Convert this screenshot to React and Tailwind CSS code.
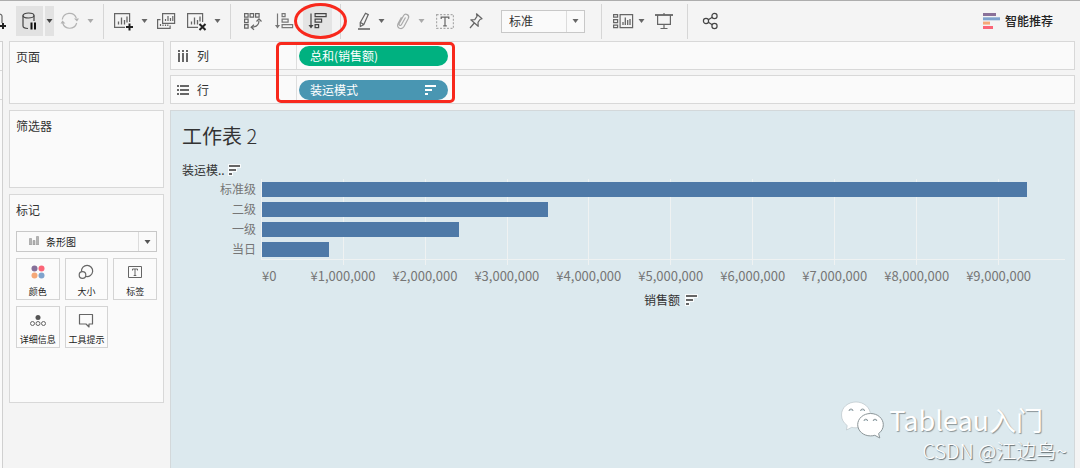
import React from "react";

const MAX = 9.81;
const BARS = [
  { label: "标准级", value: 9.34 },
  { label: "二级", value: 3.5 },
  { label: "一级", value: 2.41 },
  { label: "当日", value: 0.82 },
];
const TICKS = [1, 2, 3, 4, 5, 6, 7, 8, 9];
const pct = (v) => `${(v / MAX) * 100}%`;

function Caret({ className = "" }) {
  return (
    <svg width="7" height="4" viewBox="0 0 7 4" className={className} aria-hidden="true">
      <path d="M0.5 0h6L3.5 4z" fill="currentColor" />
    </svg>
  );
}

function Tool({ label, className, children }) {
  return (
    <button type="button" aria-label={label} className={`flex h-[30px] shrink-0 items-center justify-center ${className}`}>
      {children}
    </button>
  );
}

function Icon({ w = 20, h = 20, children, className = "text-[#666]", sw = 1.2 }) {
  return (
    <svg
      width={w}
      height={h}
      viewBox={`0 0 ${w} ${h}`}
      fill="none"
      stroke="currentColor"
      strokeWidth={sw}
      className={`shrink-0 ${className}`}
      aria-hidden="true"
    >
      {children}
    </svg>
  );
}

function Separator({ className }) {
  return <div className={`h-[35px] w-px shrink-0 bg-[#d6d6d6] ${className}`} />;
}

function SortGlyph({ color = "#666", halo = false }) {
  return (
    <svg width="13" height="12" viewBox="0 0 13 12" className="shrink-0" aria-hidden="true">
      {halo && <path d="M0 0h13v4H9v4H5v4H0z" fill="#fff" opacity="0.8" />}
      <path d="M1 1h11v2H1zM1 5h7v2H1zM1 9h3v2H1z" fill={color} />
    </svg>
  );
}

function Toolbar() {
  return (
    <header className="flex h-[41px] items-center border-t border-[#adadad]">
      <Tool label="新建数据源" className="w-2">
        <Icon w={8} h={20}>
          <path d="M0 3.2c1.200.3 2 1 2 1.800v7" />
          <path d="M3 12v6M0 15h6" stroke="#222" strokeWidth="2" />
        </Icon>
      </Tool>
      <Tool label="暂停自动更新" className="ml-2 w-[27px] bg-[#e2e2e2]">
        <Icon className="text-[#444]" w={20} h={20}>
          <ellipse cx="8.500" cy="4.500" rx="5.500" ry="2.500" />
          <path d="M3 4.500v10.500c0 1.200 1.800 2.300 5 2.500M14 4.500v5.500" />
          <path d="M11.500 11.500v7M15 11.500v7" stroke="#111" strokeWidth="2" />
        </Icon>
      </Tool>
      <Tool label="自动更新选项" className="ml-[2px] w-[9px] bg-[#e2e2e2] text-[#444]">
        <Caret />
      </Tool>
      <Tool label="刷新" className="ml-[6px] w-5">
        <Icon className="text-[#b3b3b3]">
          <path d="M2.300 8.500a7.300 7.300 0 0 1 14-1.500M16.700 12a7.300 7.300 0 0 1-14 0" />
          <path d="M14 7.500h5l-2 3zM.500 12.500h5l-3-3z" fill="currentColor" stroke="none" />
        </Icon>
      </Tool>
      <Tool label="刷新选项" className="ml-1 w-3 text-[#aaa]"><Caret /></Tool>
      <Separator className="ml-[7px]" />
      <Tool label="新建工作表" className="ml-[9px] w-[21px]">
        <Icon w={21} h={20}>
          <path d="M12 16.400H1.600V2.600h15V11" />
          <path d="M5.500 13.500v-3M8.500 13.500v-7M11.500 13.500V9M14 11.500V5.500" strokeWidth="1.300" />
          <path d="M16.500 12.500v7M13 16h7" stroke="#222" strokeWidth="2" />
        </Icon>
      </Tool>
      <Tool label="新建选项" className="ml-1 w-3 text-[#666]"><Caret /></Tool>
      <Tool label="复制工作表" className="ml-[6px] w-5">
        <Icon>
          <path d="M6.600 2.600h12v9.800h-12z" />
          <path d="M9.500 10V8M12 10V5M14.500 10V7M16.800 10V5" />
          <path d="M4.500 8.600H1.600v8.800h12.500V14.500" />
          <path d="M4.500 15v-2M7 15v-1.500M9.500 15v-1.500M11.800 15v-1.500" />
        </Icon>
      </Tool>
      <Tool label="清除工作表" className="ml-[10px] w-[21px]">
        <Icon w={21} h={20}>
          <path d="M12 16.400H1.600V2.600h15V11" />
          <path d="M5.500 13.500v-3M8.500 13.500v-7M11.500 13.500V9M14 10.500V5.500" strokeWidth="1.300" />
          <path d="M13.500 13l6 6M19.500 13l-6 6" stroke="#222" strokeWidth="2" />
        </Icon>
      </Tool>
      <Tool label="清除选项" className="ml-1 w-3 text-[#666]"><Caret /></Tool>
      <Separator className="ml-[7px]" />
      <Tool label="交换行和列" className="ml-3 w-5">
        <Icon>
          <path d="M1.600 2.600h3.500v3.500H1.600zM7.100 2.600h3.500v3.500H7.100zM12.600 2.600h3.500v3.500h-3.500zM1.600 8.100h3.500v3.500H1.600zM1.600 13.600h3.500v3.500H1.600z" />
          <path d="M16 9.500c0 4-2.500 6.500-7.500 6.800" />
          <path d="M13.500 10.500L16 7.800l2.500 2.700M11 13.800l-2.800 2.500 2.800 2.500" />
        </Icon>
      </Tool>
      <Tool label="升序排序" className="ml-3 w-5">
        <Icon className="text-[#777]">
          <path d="M2.500 2.500v13" />
          <path d="M0 14h5l-2.500 3.500z" fill="currentColor" stroke="none" />
          <path d="M7.100 2.600h3v3h-3zM7.100 8.100h6v3h-6zM7.100 13.600h10.500v3H7.100z" />
        </Icon>
      </Tool>
      <div className="relative ml-2 shrink-0">
        <Tool label="降序排序" className="w-[29px] bg-[#e4e4e4]">
          <Icon className="text-[#444]">
            <path d="M3 2.500v13" />
            <path d="M.500 14h5L3 17.500z" fill="currentColor" stroke="none" />
            <path d="M7.100 2.600h11v3h-11zM7.100 8.100h6.500v3H7.100zM7.100 13.600h3.500v3H7.100z" />
          </Icon>
        </Tool>
        <div className="pointer-events-none absolute -top-[3px] -left-[9px] z-10 h-9 w-[53px] rounded-[50%] border-[3px] border-[#f8281c]" />
      </div>
      <Separator className="ml-2" />
      <Tool label="突出显示" className="ml-[15px] w-4">
        <Icon w={16} h={20}>
          <path d="M9.500 2.300l2.800 1.300-4.500 10-3.500 2-.1-4zM4.500 11.500l3.300 2" />
          <path d="M2 18h12" strokeWidth="1.600" />
        </Icon>
      </Tool>
      <Tool label="突出显示选项" className="ml-[3px] w-3 text-[#666]"><Caret /></Tool>
      <Tool label="组成员" className="ml-2 w-4">
        <Icon w={16} h={20} className="text-[#aaa]">
          <path d="M10.500 6.500l-4 7c-1.200 2-3.200.7-2.200-1.300l4.200-7.500c1.800-3 6.500-.8 4.800 2.800l-4.300 8c-2.300 4-8 1.500-6-2.800l3.500-6.500" />
        </Icon>
      </Tool>
      <Tool label="组选项" className="ml-1 w-3 text-[#aaa]"><Caret /></Tool>
      <Tool label="显示标记标签" className="ml-2 w-5">
        <Icon>
          <path d="M1.600 3.600h16.800v13.800H1.600z" strokeDasharray="2 1.500" stroke="#aaa" />
          <path d="M6.200 8V6.100h7.600V8M10 6v8.800M8.200 14.800h3.600" />
        </Icon>
      </Tool>
      <Tool label="固定轴" className="ml-[13px] w-4">
        <Icon w={16} h={20}>
          <path d="M8.500 2.800l5.500 5-2 .7-2 2.800.2 4-7.400-6.500 4-.2 2.200-3.300zM6.300 12L2 17" strokeLinejoin="round" />
        </Icon>
      </Tool>
      <div className="relative ml-[17px] w-[84px] shrink-0">
        <select aria-label="适合" className="block h-[23px] w-full appearance-none border border-[#c8c8c8] bg-[#fafafa] pl-[7px] text-[12px] text-[#333]">
          <option>标准</option>
        </select>
        <div className="pointer-events-none absolute inset-y-px right-px flex w-[18px] items-center justify-center border-l border-[#dcdcdc] text-[#666]">
          <Caret />
        </div>
      </div>
      <Separator className="ml-4" />
      <Tool label="显示/隐藏卡" className="ml-[10px] w-[22px]">
        <Icon w={22} h={20}>
          <path d="M1.600 3.600h4v2.500h-4zM1.600 8.600h4v3h-4zM1.600 14.100h4v2.500h-4zM8.100 3.600h12.500v13H8.100z" />
          <path d="M11 14v-3M13.300 14V6.500M15.700 14V9M18 14V8" strokeWidth="1.300" />
        </Icon>
      </Tool>
      <Tool label="卡选项" className="ml-px w-3 text-[#666]"><Caret /></Tool>
      <Tool label="演示模式" className="ml-[7px] w-5">
        <Icon>
          <path d="M1 4h18" strokeWidth="1.800" />
          <path d="M3.600 4v9.400h12.800V4M10 2v2M10 13.400v4M6.500 17.500h7" />
        </Icon>
      </Tool>
      <Separator className="ml-[13px]" />
      <Tool label="共享" className="ml-[14px] w-[18px]">
        <Icon w={18} h={20} className="text-[#444]">
          <circle cx="4" cy="10" r="2.600" />
          <circle cx="12.500" cy="5" r="2.600" />
          <circle cx="12.500" cy="15" r="2.600" />
          <path d="M6.300 8.800l4-2.500M6.300 11.200l4 2.500" />
        </Icon>
      </Tool>
      <button type="button" className="mr-[27px] ml-auto flex h-[30px] shrink-0 items-center gap-[5px] text-[12px] font-medium text-[#222]">
        <svg width="17" height="16" viewBox="0 0 17 16" aria-hidden="true">
          <path d="M0 0h13v3H0z" fill="#8a7199" />
          <path d="M0 4.300h17v3H0z" fill="#7fa3cd" />
          <path d="M0 8.600h7v3H0z" fill="#f5a878" />
          <path d="M0 13h10v3H0z" fill="#fb6577" />
        </svg>
        智能推荐
      </button>
    </header>
  );
}

function Card({ title, className, children }) {
  return (
    <section className={`border border-[#d8d8d8] bg-[#fafafa] px-[6px] pt-[7px] ${className}`}>
      <h2 className="text-[12px] leading-4 text-[#333]">{title}</h2>
      {children}
    </section>
  );
}

function Mark({ label, children }) {
  return (
    <button type="button" className="flex h-[42px] flex-col items-center justify-between border border-[#d4d4d4] bg-[#fbfbfb] pt-1 text-[9px] leading-[14px] whitespace-nowrap text-[#222]">
      {children}
      {label}
    </button>
  );
}

function SideBar() {
  return (
    <aside className="flex w-[155px] shrink-0 flex-col gap-[6px]">
      <Card title="页面" className="min-h-[63px]" />
      <Card title="筛选器" className="min-h-[78px]" />
      <Card title="标记" className="min-h-[209px]">
        <div className="relative mt-[13px]">
          <select aria-label="标记类型" className="block h-[21px] w-full appearance-none border border-[#c8c8c8] bg-[#fafafa] pl-[29px] text-[10px] text-[#222]">
            <option>条形图</option>
          </select>
          <svg width="10" height="9" viewBox="0 0 10 9" className="pointer-events-none absolute top-[5px] left-[13px]" aria-hidden="true">
            <path d="M.500 2.500h2V9h-2zM4 4.500h2V9H4zM7.500.500h2V9h-2z" fill="#b5b5b5" stroke="#888" strokeWidth=".5" />
          </svg>
          <div className="pointer-events-none absolute inset-y-px right-px flex w-[18px] items-center justify-center border-l border-[#dcdcdc] text-[#555]">
            <Caret />
          </div>
        </div>
        <div className="mt-[6px] grid grid-cols-3 gap-x-[5px] gap-y-[6px]">
          <Mark label="颜色">
            <Icon w={18} h={18}>
              <g stroke="none">
                <circle cx="5.500" cy="5.500" r="3" fill="#857099" />
                <circle cx="12.500" cy="5.500" r="3" fill="#fb6577" />
                <circle cx="5.500" cy="12.500" r="3" fill="#f5a878" />
                <circle cx="12.500" cy="12.500" r="3" fill="#7fa3cd" />
              </g>
            </Icon>
          </Mark>
          <Mark label="大小">
            <Icon w={18} h={18}>
              <path d="M4.500 8.500A5.600 5.600 0 1 1 9 13.500" />
              <circle cx="5.500" cy="12" r="3.300" />
            </Icon>
          </Mark>
          <Mark label="标签">
            <Icon w={18} h={18} sw={1}>
              <path d="M2.500 3.500h13v11h-13z" />
              <path d="M6.500 7.500V6h5v1.500M9 6v6.500M7.700 12.500h2.600" />
            </Icon>
          </Mark>
          <Mark label="详细信息">
            <Icon w={18} h={18} sw={1}>
              <circle cx="9" cy="6.500" r="2.500" fill="#555" stroke="none" />
              <circle cx="3.500" cy="12.500" r="2" />
              <circle cx="9" cy="12.500" r="2" />
              <circle cx="14.500" cy="12.500" r="2" />
            </Icon>
          </Mark>
          <Mark label="工具提示">
            <Icon w={18} h={18}>
              <path d="M2.500 3.500h13v9.500h-3.500v3L9 13H2.500z" strokeLinejoin="round" />
            </Icon>
          </Mark>
        </div>
      </Card>
    </aside>
  );
}

function Shelf({ title, icon, children }) {
  return (
    <div className="flex h-[29px] items-center border border-[#d8d8d8] bg-[#fafafa]">
      <div className="flex h-full w-[126px] shrink-0 items-center gap-2 border-r border-[#dedede] pl-[6px] text-[12px] text-[#333]">
        {icon}
        {title}
      </div>
      {children}
    </div>
  );
}

function Shelves() {
  return (
    <div className="relative flex flex-col gap-[5px]">
      <Shelf
        title="列"
        icon={
          <svg width="12" height="12" viewBox="0 0 12 12" fill="#666" aria-hidden="true">
            <path d="M1 0h2v2H1zM5 0h2v2H5zM9 0h2v2H9zM1 3h2v9H1zM5 3h2v9H5zM9 3h2v9H9z" />
          </svg>
        }
      >
        <button type="button" className="ml-[2px] flex h-5 w-[149px] items-center rounded-full bg-[#00b180] pl-[11px] text-[12px] text-white">
          总和(销售额)
        </button>
      </Shelf>
      <Shelf
        title="行"
        icon={
          <svg width="12" height="12" viewBox="0 0 12 12" fill="#666" aria-hidden="true">
            <path d="M0 1h2v2H0zM0 5h2v2H0zM0 9h2v2H0zM3 1h9v2H3zM3 5h9v2H3zM3 9h9v2H3z" />
          </svg>
        }
      >
        <button type="button" className="ml-[2px] flex h-5 w-[149px] items-center justify-between rounded-full bg-[#4996b2] pr-[11px] pl-[11px] text-[12px] text-white">
          装运模式
          <SortGlyph color="#fff" />
        </button>
      </Shelf>
      <div className="pointer-events-none absolute top-px left-[106px] h-[61px] w-[179px] rounded-[5px] border-[3px] border-[#f8281c]" />
    </div>
  );
}

function Chart() {
  return (
    <div className="pr-[9px] text-[12px] text-[#767676]">
      <div className="flex h-[18px] items-center gap-[3px] pl-[11px] text-[#333]">
        装运模..
        <SortGlyph halo />
      </div>
      <div className="flex">
        <ul className="w-[90px] shrink-0 pr-[5px] text-right leading-5">
          {BARS.map((b) => (
            <li key={b.label}>{b.label}</li>
          ))}
        </ul>
        <div className="relative flex-1 border-b border-l border-[#eff2f2]">
          {TICKS.map((t) => (
            <div key={t} className="absolute top-0 -bottom-[6px] -ml-px w-px bg-[#eff2f2]" style={{ left: pct(t) }} />
          ))}
          {BARS.map((b) => (
            <div key={b.label} className="relative flex h-5 items-center">
              <div className="h-[15px] bg-[#4e79a7]" style={{ width: pct(b.value) }} />
            </div>
          ))}
        </div>
      </div>
      <div className="relative mt-[6px] ml-[90px] h-5 text-[13px] leading-5">
        <span className="absolute left-px">¥0</span>
        {TICKS.map((t) => (
          <span key={t} className="absolute -translate-x-1/2" style={{ left: pct(t) }}>
            ¥{t},000,000
          </span>
        ))}
      </div>
      <div className="mt-1 ml-[90px] flex h-5 items-center justify-center gap-[5px] pl-4 text-[#333]">
        销售额
        <SortGlyph halo />
      </div>
    </div>
  );
}

function Watermark() {
  return (
    <div className="pointer-events-none absolute right-[7px] bottom-[5px] flex flex-col items-end text-white">
      <div className="mr-[24px] flex items-center gap-1 text-[27px] leading-8 [text-shadow:1px_1px_1px_#8b9598]">
        <svg width="44" height="38" viewBox="0 0 44 38" aria-hidden="true" fill="#fff" stroke="#b4bec2" strokeWidth="0.600">
          <path d="M15 1C7 1 .500 6.500.500 14c0 4.300 2.200 8 5.700 10.500L5.500 29l5.200-2.700c1.400.4 2.800.5 4.300.5 8 0 14.500-5.500 14.500-12.800S23 1 15 1z" />
          <path d="M29.500 12.500c-7.200 0-12.800 5-12.800 11.200s5.600 11.200 12.800 11.200c1.500 0 3-.2 4.300-.6l5 2.700-1.200-4.500c3-2 4.700-5.200 4.700-8.800 0-6.200-5.600-11.200-12.800-11.200z" stroke="#8b9598" strokeWidth="1" />
          <path d="M8 10a2 2 0 1 1 4 0M19.600 10a2 2 0 1 1 4 0M23 20a1.800 1.800 0 1 1 3.600 0M32.200 20a1.800 1.800 0 1 1 3.600 0" fill="#dce9ee" stroke="#8b9598" strokeWidth="1" />
        </svg>
        Tableau入门
      </div>
      <div className="text-[20px] leading-6 font-light [text-shadow:1px_1px_1px_#5f686b]">CSDN @江边鸟~</div>
    </div>
  );
}

export default function App() {
  return (
    <div className="flex min-h-screen flex-col overflow-hidden bg-[#f4f4f4] font-['Noto_Sans_CJK_SC',sans-serif]">
      <Toolbar />
      <div className="flex flex-1 pr-[5px]">
        <div className="mr-[6px] w-[3px] shrink-0 border-t border-r border-[#d0d0d0] bg-[#fafafa]">
          <div className="h-[29px] border-b border-[#d8d8d8]" />
          <div className="h-[29px] border-b border-[#d8d8d8]" />
        </div>
        <SideBar />
        <main className="ml-[6px] flex min-w-0 flex-1 flex-col gap-[6px]">
          <Shelves />
          <section className="relative flex-1 border-x border-t border-[#d3d8da] bg-[#dce9ee]">
            <h1 className="mt-[9px] mb-[9px] pl-[11px] text-[20px] leading-8 text-[#333]">
              工作表 <span className="font-light">2</span>
            </h1>
            <Chart />
            <Watermark />
          </section>
        </main>
      </div>
    </div>
  );
}
